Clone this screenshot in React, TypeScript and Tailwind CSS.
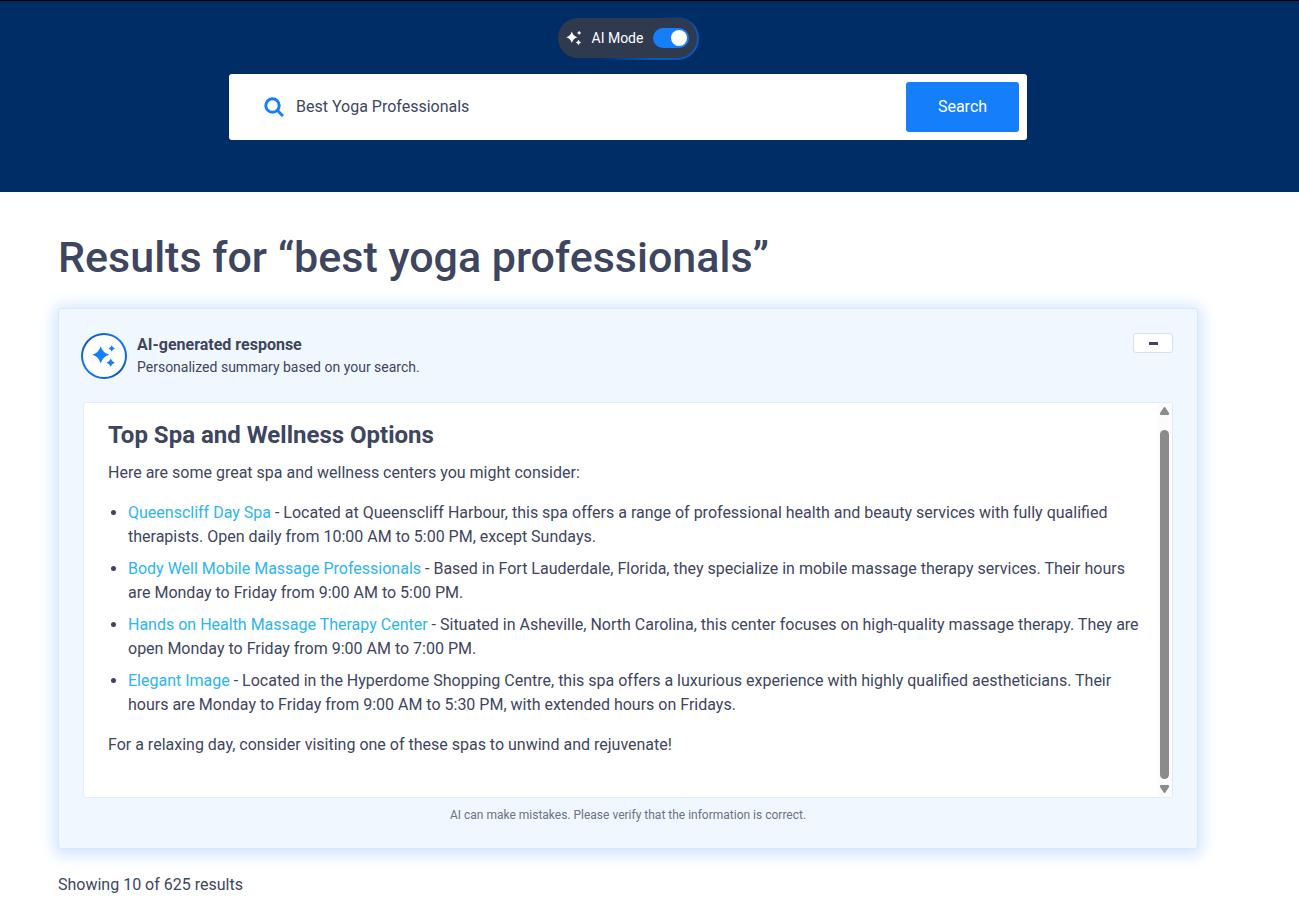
import { useState } from 'react'

interface Listing {
  name: string
  description: string
}

const listings: Listing[] = [
  {
    name: 'Queenscliff Day Spa',
    description:
      'Located at Queenscliff Harbour, this spa offers a range of professional health and beauty services with fully qualified therapists. Open daily from 10:00 AM to 5:00 PM, except Sundays.'
  },
  {
    name: 'Body Well Mobile Massage Professionals',
    description:
      'Based in Fort Lauderdale, Florida, they specialize in mobile massage therapy services. Their hours are Monday to Friday from 9:00 AM to 5:00 PM.'
  },
  {
    name: 'Hands on Health Massage Therapy Center',
    description:
      'Situated in Asheville, North Carolina, this center focuses on high-quality massage therapy. They are open Monday to Friday from 9:00 AM to 7:00 PM.'
  },
  {
    name: 'Elegant Image',
    description:
      'Located in the Hyperdome Shopping Centre, this spa offers a luxurious experience with highly qualified aestheticians. Their hours are Monday to Friday from 9:00 AM to 5:30 PM, with extended hours on Fridays.'
  }
]

const Sparkles = ({ className }: { className: string }) => (
  <svg viewBox="0 0 24 24" fill="currentColor" aria-hidden="true" className={className}>
    <path d="M8.7 2.2 Q10.7 8.9 17.3 10.8 Q10.7 12.7 8.7 19.4 Q6.8 12.7 0.2 10.8 Q6.8 8.9 8.7 2.2Z" />
    <path d="M19.7 1.2 Q20.5 3.7 22.9 4.4 Q20.5 5.1 19.7 7.6 Q18.9 5.1 16.5 4.4 Q18.9 3.7 19.7 1.2Z" />
    <path d="M18.7 14.6 Q19.7 17.8 22.8 18.7 Q19.7 19.6 18.7 22.8 Q17.7 19.6 14.6 18.7 Q17.7 17.8 18.7 14.6Z" />
  </svg>
)

const SearchHeader = () => {
  const [aiMode, setAiMode] = useState(true)
  const [query, setQuery] = useState('Best Yoga Professionals')

  return (
    <header className="border-t border-black bg-[#002d66] pt-4 pr-[43px] pb-[52px]">
      <div className="mx-auto flex max-w-[798px] flex-col items-center gap-3.5">
        <div className="rounded-full bg-[linear-gradient(145deg,#002d66_50%,#0a57b5_75%)] pt-px pr-0.5 pb-0.5">
          <label className="flex h-10 w-[139px] cursor-pointer items-center rounded-full bg-[#303a4f] pl-2 text-sm text-white">
            <Sparkles className="mr-2.5 size-4" />
            <span className="grow">AI Mode</span>
            <input
              type="checkbox"
              role="switch"
              checked={aiMode}
              onChange={(e) => setAiMode(e.target.checked)}
              className="peer sr-only"
            />
            <span className="mr-2 flex h-5 w-9 items-center rounded-full bg-gray-500 px-0.5 peer-checked:justify-end peer-checked:bg-[#157efb]">
              <span className="size-4 rounded-full bg-white" />
            </span>
          </label>
        </div>

        <form
          onSubmit={(e) => e.preventDefault()}
          className="flex w-full items-center rounded-[3px] bg-white p-2 pl-[35px]"
        >
          <svg viewBox="0 0 20 20" fill="none" stroke="#157efb" strokeWidth="3" aria-hidden="true" className="mr-3 size-5 shrink-0">
            <circle cx="8.5" cy="8.5" r="6.7" />
            <path d="M13 13 L19 19" />
          </svg>
          <input
            type="text"
            aria-label="Search"
            value={query}
            onChange={(e) => setQuery(e.target.value)}
            className="min-w-0 grow text-[#3e455e] outline-none"
          />
          <button type="submit" className="h-[50px] w-[113px] rounded-[3px] bg-[#157efb] text-white">
            Search
          </button>
        </form>
      </div>
    </header>
  )
}

const ScrollTrack = () => (
  <div aria-hidden="true" className="flex w-[15px] shrink-0 flex-col items-center bg-[#fbfbfb] py-1 text-[#8b8b8b]">
    <svg viewBox="0 0 9 8" fill="currentColor" className="h-2 w-[9px]">
      <path d="M4 0 H5 L9 6 V7 Q9 8 8 8 H1 Q0 8 0 7 V6Z" />
    </svg>
    <div className="mt-[15px] mb-1.5 w-[9px] grow rounded-full bg-[#8b8b8b]" />
    <svg viewBox="0 0 9 8" fill="currentColor" className="h-2 w-[9px]">
      <path d="M4 8 H5 L9 2 V1 Q9 0 8 0 H1 Q0 0 0 1 V2Z" />
    </svg>
  </div>
)

const AiResponse = () => {
  const [expanded, setExpanded] = useState(true)

  return (
    <section className="rounded-[3px] border border-[#d5e8fe] bg-[#f0f7ff] px-6 py-6 shadow-[0_2px_16px_4px_#cfe4fd]">
      <div className="flex items-start justify-between">
        <div className="-ml-0.5 flex gap-2.5">
          <div className="size-[46px] rounded-full bg-[linear-gradient(135deg,#0b4ea8,#157efb_50%,#0b4ea8)] p-0.5">
            <div className="flex size-full items-center justify-center rounded-full bg-white">
              <Sparkles className="size-6 text-[#157efb]" />
            </div>
          </div>
          <div>
            <h2 className="leading-6 font-bold">AI-generated response</h2>
            <p className="text-sm leading-5">Personalized summary based on your search.</p>
          </div>
        </div>
        <button
          type="button"
          aria-label="Toggle AI response"
          aria-expanded={expanded}
          onClick={() => setExpanded(!expanded)}
          className="flex h-5 w-10 items-center justify-center rounded-[3px] border border-[#dcdfe5] bg-white"
        >
          <span className="h-[3px] w-[9px] bg-[#3e455e]" />
        </button>
      </div>

      {expanded && (
        <div className="mt-[23px] flex rounded-[3px] border border-[#deebfb] bg-white">
          <div className="grow pt-4 pr-3 pb-10 pl-6">
            <h3 className="mb-2.5 text-2xl leading-8 font-bold">Top Spa and Wellness Options</h3>
            <p>Here are some great spa and wellness centers you might consider:</p>
            <ul className="my-4 list-disc space-y-2 pl-5">
              {listings.map(({ name, description }) => (
                <li key={name}>
                  <a href="#" className="text-[#2cb5ee]">{name}</a> - {description}
                </li>
              ))}
            </ul>
            <p>For a relaxing day, consider visiting one of these spas to unwind and rejuvenate!</p>
          </div>
          <ScrollTrack />
        </div>
      )}
      <p className="mt-2 text-center text-xs leading-[18px] text-[#6c7285]">
        AI can make mistakes. Please verify that the information is correct.
      </p>
    </section>
  )
}

export default function App() {
  return (
    <div className="bg-white font-[Roboto,'Liberation_Sans',sans-serif] text-base text-[#3e455e]">
      <SearchHeader />
      <main className="pr-[43px]">
        <div className="mx-auto max-w-[1140px] pt-10">
          <h1 className="mb-[26px] text-[43px] leading-[50px] font-medium">
            Results for “best yoga professionals”
          </h1>
          <AiResponse />
          <p className="mt-6">Showing 10 of 625 results</p>
        </div>
      </main>
    </div>
  )
}
